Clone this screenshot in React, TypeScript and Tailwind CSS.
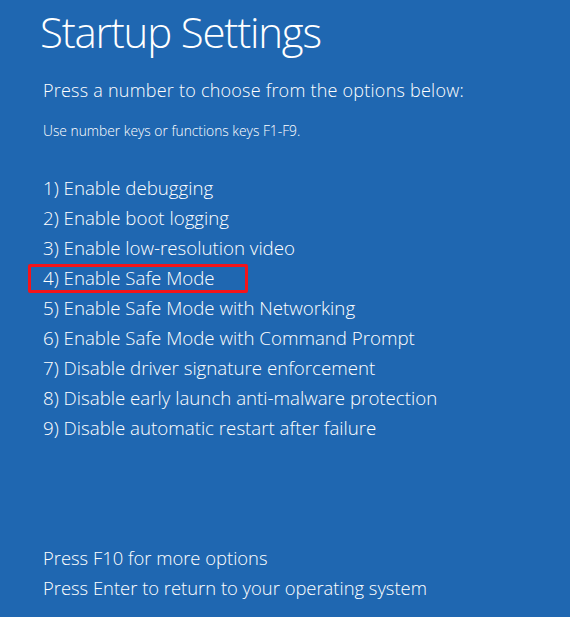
import React from "react";

const options = [
  "1) Enable debugging",
  "2) Enable boot logging",
  "3) Enable low-resolution video",
  "4) Enable Safe Mode",
  "5) Enable Safe Mode with Networking",
  "6) Enable Safe Mode with Command Prompt",
  "7) Disable driver signature enforcement",
  "8) Disable early launch anti-malware protection",
  "9) Disable automatic restart after failure",
];

export default function App() {
  return (
    <div
      className="w-[570px] h-[617px] bg-[#1f67b1] text-white overflow-hidden flex flex-col pl-[43px]"
      style={{ fontFamily: '"Open Sans", "Noto Sans", sans-serif' }}
    >
      <h1 className="text-[42px] font-light leading-[52px] mt-[6px] -ml-[3px] tracking-[-1.2px]">Startup Settings</h1>

      <p className="text-[18px] font-light leading-[30px] mt-[17px] tracking-[0.23px]">
        Press a number to choose from the options below:
      </p>

      <p className="text-[13.8px] leading-[20px] mt-[16px] font-light">Use number keys or functions keys F1-F9.</p>

      <ul className="flex flex-col mt-[32px]">
        {options.map((o, i) => (
          <li key={o} className="h-[30px] flex items-center text-[18.7px] font-light relative">
            {i === 3 && (
              <span className="absolute left-[-15px] top-[1px] w-[220px] h-[29px] border-[3px] border-[#f5141a] rounded-[2px]" />
            )}
            {o}
          </li>
        ))}
      </ul>

      <div className="flex flex-col mt-[100px]">
        <p className="h-[30px] flex items-center text-[18.4px] font-light">Press F10 for more options</p>
        <p className="h-[30px] flex items-center text-[18.4px] font-light">Press Enter to return to your operating system</p>
      </div>
    </div>
  );
}
